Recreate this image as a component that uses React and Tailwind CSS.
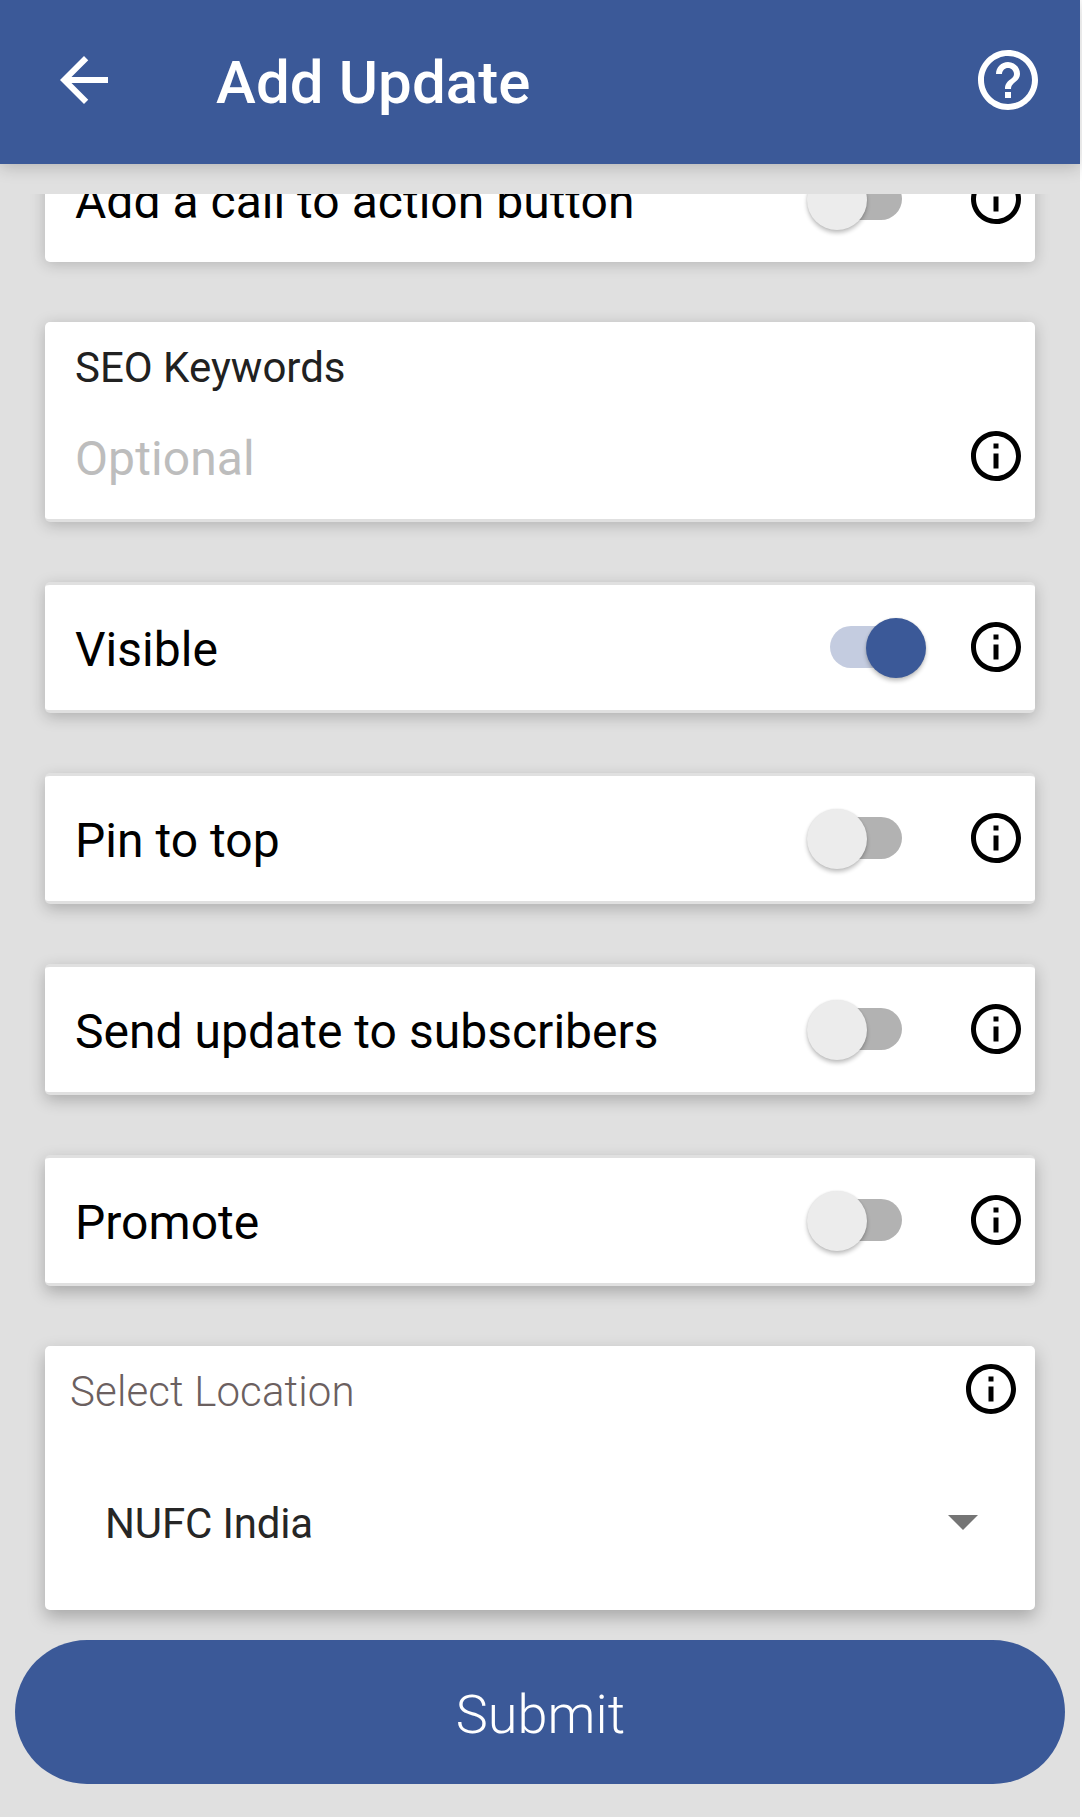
import { MdArrowBack, MdArrowDropDown, MdHelpOutline, MdInfoOutline } from "react-icons/md";
import clsx from "clsx";

const Switch = ({ on }) => (
  <div className="relative flex items-center w-[120px] h-[60px]">
    <div
      className={clsx(
        "w-[84px] h-[42px] rounded-full",
        on ? "ml-6 bg-[#c4cce0]" : "ml-3 bg-[#b2b2b2]"
      )}
    />
    <div
      className={clsx(
        "absolute top-[0.5px] size-[60px] rounded-full shadow-[0_3px_4px_rgba(0,0,0,0.24),0_0_2px_rgba(0,0,0,0.1)]",
        on ? "right-[0.5px] bg-[#3b5998]" : "left-[0.5px] bg-[#ececec]"
      )}
    />
  </div>
);

const Info = () => <MdInfoOutline className="size-[60px] shrink-0 text-black" />;

const ToggleRow = ({ label, on, className }) => (
  <div
    className={clsx(
      "flex shrink-0 items-center bg-white rounded-[5px] pl-[30px] pr-[9px] pb-px",
      className
    )}
  >
    <span className="flex-1 pt-[5px] text-[48px] leading-[56px] tracking-[0.02px] text-black">{label}</span>
    <Switch on={on} />
    <div className="ml-10">
      <Info />
    </div>
  </div>
);

const App = () => {
  return (
    <div className="w-[1082px] h-[1817px] bg-white overflow-hidden">
      <div className="w-[1080px] h-full flex flex-col bg-[#e0e0e0] font-[Roboto,sans-serif]">
        <header className="h-[164px] shrink-0 flex items-center pl-12 pr-9 pb-1 bg-[#3b5998] text-white shadow-[0_3px_16px_rgba(0,0,0,0.2)]">
          <MdArrowBack className="size-[72px]" />
          <h1 className="flex-1 ml-24 pt-[5px] text-[60px] leading-[70px] font-medium tracking-[0.1px]">Add Update</h1>
          <MdHelpOutline className="size-[72px]" />
        </header>

        {/* scrolled form, first card is cut by the top edge */}
        <main className="mt-[30px] h-[1446px] shrink-0 overflow-hidden px-[45px]">
          <div className="-mt-[57px] flex flex-col gap-[60px]">
            <ToggleRow
              label="Add a call to action button"
              className="h-[125px] shadow-[0_2px_15px_rgba(0,0,0,0.2)]"
            />

            <div className="h-[200px] flex flex-col bg-white rounded-[5px] border-b-3 border-[#e0e0e0] pl-[30px] pr-[9px] pt-[22px] shadow-[0_3px_15px_rgba(0,0,0,0.21)]">
              <span className="text-[42px] leading-[48px] text-[#212121]">SEO Keywords</span>
              <div className="flex items-center mt-[34px]">
                <span className="flex-1 pt-[5px] text-[48px] leading-[55px] tracking-[0.1px] text-[#bdbdbd]">Optional</span>
                <Info />
              </div>
            </div>

            <ToggleRow
              label="Visible"
              on
              className="h-[131px] border-y-3 border-[#e0e0e0] shadow-[0_4px_15px_rgba(0,0,0,0.22)]"
            />
            <ToggleRow
              label="Pin to top"
              className="h-[131px] border-y-3 border-[#e0e0e0] shadow-[0_5px_15px_rgba(0,0,0,0.22)]"
            />
            <ToggleRow
              label="Send update to subscribers"
              className="h-[131px] border-y-3 border-[#e0e0e0] shadow-[0_5px_16px_rgba(0,0,0,0.24)]"
            />
            <ToggleRow
              label="Promote"
              className="h-[131px] border-y-3 border-[#e0e0e0] shadow-[0_6px_16px_rgba(0,0,0,0.25)]"
            />

            <div className="h-[264px] bg-white rounded-[5px] shadow-[0_7px_17px_rgba(0,0,0,0.26)]">
              <div className="flex items-center pl-[25px] pr-[14px] pt-[13px]">
                <span className="flex-1 pt-[5px] text-[42px] leading-[49px] tracking-[0.14px] font-light text-[#6b6060]">
                  Select Location
                </span>
                <Info />
              </div>
              <div className="flex items-center pl-[60px] pr-9 mt-[66px]">
                <span className="flex-1 pt-1 text-[42px] leading-[49px] tracking-[-0.15px] text-[#262626]">NUFC India</span>
                <MdArrowDropDown className="size-[72px] text-[#757575]" />
              </div>
            </div>
          </div>
        </main>

        <button className="mx-[15px] h-[144px] shrink-0 rounded-full bg-[#3b5998] pt-1 pl-px text-white text-[54px] tracking-[0.1px] font-light">
          Submit
        </button>
      </div>
    </div>
  );
};

export default App;
